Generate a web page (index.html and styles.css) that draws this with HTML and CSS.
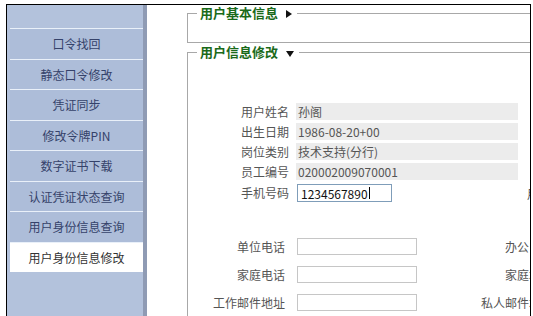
FILE: index.html
```html
<!DOCTYPE html>
<html lang="zh-CN">
<head>
  <meta charset="UTF-8">
  <title>用户身份信息修改</title>
  <link rel="stylesheet" href="styles.css">
</head>
<body>
  <div class="frame">
    <div class="sidebar">
      <ul class="menu">
        <li>口令找回</li>
        <li>静态口令修改</li>
        <li>凭证同步</li>
        <li>修改令牌PIN</li>
        <li>数字证书下载</li>
        <li>认证凭证状态查询</li>
        <li>用户身份信息查询</li>
        <li class="active">用户身份信息修改</li>
      </ul>
    </div>
    <div class="main">
      <fieldset class="box">
        <legend>用户基本信息 <svg class="arrow" width="6" height="8" viewBox="0 0 6 8"><path d="M0 0 L6 4 L0 8 Z" fill="#111"/></svg></legend>
        <div class="box-body short"></div>
      </fieldset>
      <fieldset class="box second">
        <legend>用户信息修改 <svg class="arrow" width="8" height="6" viewBox="0 0 8 6"><path d="M0 0 L8 0 L4 6 Z" fill="#111"/></svg></legend>
        <div class="box-body">
          <div class="info">
            <div class="info-row"><span class="info-label">用户姓名</span><span class="info-value">孙阁</span></div>
            <div class="info-row"><span class="info-label">出生日期</span><span class="info-value">1986-08-20+00</span></div>
            <div class="info-row"><span class="info-label">岗位类别</span><span class="info-value">技术支持(分行)</span></div>
            <div class="info-row"><span class="info-label">员工编号</span><span class="info-value">020002009070001</span></div>
            <div class="info-row phone">
              <span class="info-label">手机号码</span>
              <span class="info-edit"><span class="field active">1234567890<span class="caret"></span></span></span>
              <span class="info-extra">用户类别</span>
            </div>
          </div>
          <div class="contact">
            <div class="contact-row">
              <span class="c-label">单位电话</span><input class="c-input" type="text">
              <span class="c-label right">办公电话</span>
            </div>
            <div class="contact-row">
              <span class="c-label">家庭电话</span><input class="c-input" type="text">
              <span class="c-label right">家庭地址</span>
            </div>
            <div class="contact-row">
              <span class="c-label">工作邮件地址</span><input class="c-input" type="text">
              <span class="c-label right">私人邮件地址</span>
            </div>
          </div>
        </div>
      </fieldset>
    </div>
  </div>
</body>
</html>
```
FILE: styles.css
```css
* {
  margin: 0;
  padding: 0;
  box-sizing: border-box;
}
body {
  font-family: "Noto Sans CJK SC", "DejaVu Sans", sans-serif;
  font-size: 12px;
  background: #fff;
  color: #555;
  overflow: hidden;
}
.frame {
  display: flex;
  margin: 4px 0 0 6px;
  width: 525px;
  height: 312px;
  border: 1px solid #000;
  border-bottom: none;
  overflow: hidden;
}
.sidebar {
  width: 140px;
  flex-shrink: 0;
  background: #b3c2dc;
  border-right: 4px solid #8f9bb4;
  padding: 23px 0 0 3px;
}
.menu {
  list-style: none;
}
.menu li {
  height: 30.5px;
  line-height: 29px;
  border-top: 1px solid #e9f0f9;
  background: #adbdd9;
  text-align: center;
  color: #35426a;
}
.menu li.active {
  background: #fff;
  color: #333;
}
.main {
  flex: 1;
  overflow: hidden;
  padding-left: 40px;
  background: #fff;
}
.box {
  width: 420px;
  border: 1px solid #a8a8a8;
  padding: 0;
}
.box.second {
  margin-top: 1px;
}
.box legend {
  margin-left: 9px;
  padding: 0 5px 0 3px;
  font-size: 13px;
  line-height: 16px;
  font-weight: bold;
  color: #1a6a1a;
}
.arrow {
  margin-left: 5px;
  vertical-align: 0;
}
.box-body.short {
  height: 21px;
}
.info {
  padding: 43px 0 0 53px;
}
.info-row {
  display: flex;
  height: 20px;
}
.info-label {
  width: 55px;
  line-height: 17px;
}
.info-value {
  width: 222px;
  height: 17px;
  line-height: 17px;
  padding-left: 2px;
  background: #ececec;
  color: #555;
}
.phone {
  align-items: center;
}
.phone .info-label {
  line-height: 20px;
}
.info-edit {
  width: 222px;
  padding-left: 1px;
}
.field {
  display: flex;
  align-items: center;
  width: 95px;
  height: 18px;
  padding-left: 3px;
  border: 1px solid #7f9db9;
  background: #fff;
  color: #111;
}
.caret {
  width: 1px;
  height: 12px;
  margin-left: 1px;
  background: #000;
}
.info-extra {
  padding-left: 9px;
  white-space: nowrap;
}
.contact {
  margin-top: 29px;
}
.contact-row {
  display: flex;
  align-items: center;
  height: 28px;
}
.c-label {
  width: 97px;
  text-align: right;
  white-space: nowrap;
}
.c-label.right {
  width: 136px;
}
.c-input {
  width: 120px;
  height: 17px;
  margin-left: 12px;
  border: 1px solid #c6c6c6;
  background: #fff;
  font-size: 12px;
}
```
